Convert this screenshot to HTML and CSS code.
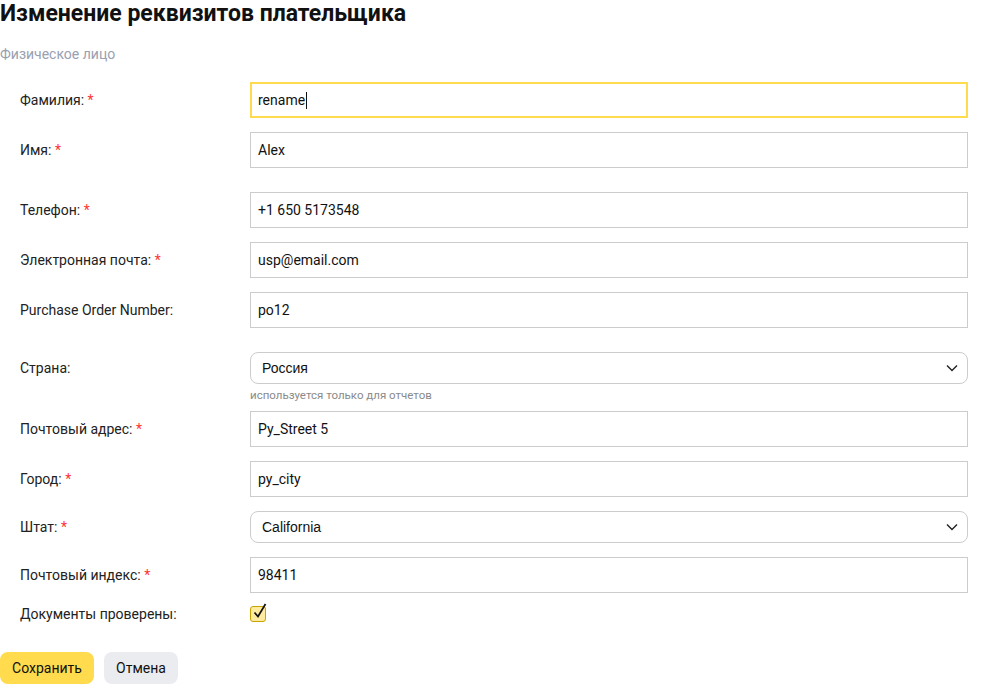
FILE: index.html
```html
<!DOCTYPE html>
<html lang="ru">
<head>
<meta charset="utf-8">
<link rel="stylesheet" href="styles.css">
</head>
<body>
<div class="page">
  <h1 class="title">Изменение реквизитов плательщика</h1>
  <div class="subtitle">Физическое лицо</div>
  <form class="form">
    <div class="row">
      <label class="label">Фамилия: <span class="req">*</span></label>
      <div class="field"><div class="input focused">rename<span class="caret"></span></div></div>
    </div>
    <div class="row gap-lg">
      <label class="label">Имя: <span class="req">*</span></label>
      <div class="field"><div class="input">Alex</div></div>
    </div>
    <div class="row">
      <label class="label">Телефон: <span class="req">*</span></label>
      <div class="field"><div class="input">+1 650 5173548</div></div>
    </div>
    <div class="row">
      <label class="label">Электронная почта: <span class="req">*</span></label>
      <div class="field"><div class="input">usp@email.com</div></div>
    </div>
    <div class="row gap-lg">
      <label class="label">Purchase Order Number:</label>
      <div class="field"><div class="input">po12</div></div>
    </div>
    <div class="row row-top gap-sm">
      <label class="label label-select">Страна:</label>
      <div class="field">
        <div class="select">Россия<svg class="chev" width="12" height="8" viewBox="0 0 12 8"><path d="M1 1.5 6 6.5 11 1.5" fill="none" stroke="#222" stroke-width="1.4"/></svg></div>
        <div class="hint">используется только для отчетов</div>
      </div>
    </div>
    <div class="row">
      <label class="label">Почтовый адрес: <span class="req">*</span></label>
      <div class="field"><div class="input">Py_Street 5</div></div>
    </div>
    <div class="row">
      <label class="label">Город: <span class="req">*</span></label>
      <div class="field"><div class="input">py_city</div></div>
    </div>
    <div class="row gap-xs">
      <label class="label">Штат: <span class="req">*</span></label>
      <div class="field"><div class="select">California<svg class="chev" width="12" height="8" viewBox="0 0 12 8"><path d="M1 1.5 6 6.5 11 1.5" fill="none" stroke="#222" stroke-width="1.4"/></svg></div></div>
    </div>
    <div class="row gap-cb">
      <label class="label">Почтовый индекс: <span class="req">*</span></label>
      <div class="field"><div class="input">98411</div></div>
    </div>
    <div class="row row-cb">
      <label class="label">Документы проверены:</label>
      <div class="field">
        <span class="checkbox"><svg class="tick" width="16" height="17" viewBox="0 0 16 17"><path d="M3.5 9.5 7 13.5 14.5 1" fill="none" stroke="#111" stroke-width="1.7"/></svg></span>
      </div>
    </div>
    <div class="actions">
      <button type="button" class="btn btn-save">Сохранить</button>
      <button type="button" class="btn btn-cancel">Отмена</button>
    </div>
  </form>
</div>
</body>
</html>
```
FILE: styles.css
```css
* { box-sizing: border-box; }
html, body { margin: 0; padding: 0; background: #fff; }
body { font-family: Roboto, "Liberation Sans", Arial, sans-serif; color: #222; }
.page { width: 968px; }
.title {
  margin: 0;
  font-size: 23px;
  line-height: 27px;
  font-weight: 700;
  color: #111;
}
.subtitle {
  margin-top: 18px;
  font-size: 14px;
  line-height: 18px;
  color: #99a0b0;
}
.form { margin-top: 19px; }
.row {
  display: flex;
  align-items: center;
  margin-bottom: 14px;
}
.row.gap-lg { margin-bottom: 24px; }
.row.gap-sm { margin-bottom: 9px; }
.row.gap-xs { margin-bottom: 14px; }
.row.gap-cb { margin-bottom: 12px; }
.row-top { align-items: flex-start; }
.label {
  width: 250px;
  flex: none;
  padding-left: 20px;
  font-size: 14px;
  line-height: 18px;
  color: #222;
}
.label-select { padding-top: 7px; }
.req { color: #f33; }
.field { flex: 1; min-width: 0; }
.input {
  height: 36px;
  border: 1px solid #ccc;
  padding: 0 7px;
  display: flex;
  align-items: center;
  font-size: 14px;
  color: #111;
}
.input.focused { border: 2px solid #ffdb4d; padding: 0 6px; }
.caret {
  display: inline-block;
  width: 1px;
  height: 17px;
  background: #111;
  margin-left: 1px;
}
.select {
  height: 32px;
  border: 1px solid #ccc;
  border-radius: 8px;
  padding: 0 11px;
  display: flex;
  align-items: center;
  justify-content: space-between;
  font-family: "Liberation Sans", Arial, sans-serif;
  font-size: 14px;
  color: #111;
}
.chev { margin-right: -2px; }
.hint {
  margin-top: 5px;
  font-size: 11.5px;
  line-height: 13px;
  color: #8a8a8a;
}
.row-cb { margin-bottom: 29px; }
.checkbox {
  position: relative;
  display: block;
  width: 16px;
  height: 16px;
  border: 1px solid #c9a400;
  border-radius: 3px;
  background: #ffeba0;
}
.tick { position: absolute; left: 0; top: -4px; }
.actions { display: flex; gap: 10px; }
.btn {
  height: 32px;
  border: none;
  border-radius: 8px;
  padding: 0 12px;
  font-family: Roboto, "Liberation Sans", Arial, sans-serif;
  font-size: 14px;
  color: #111;
}
.btn-save { background: #ffdb4d; width: 94px; }
.btn-cancel { background: #ebecf0; width: 74px; }
```
